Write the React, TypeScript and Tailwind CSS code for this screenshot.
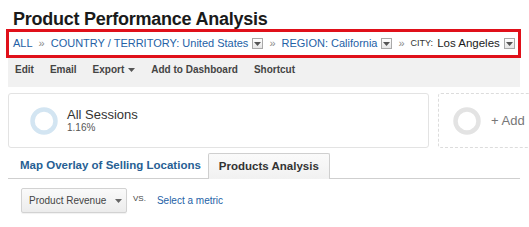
import React from "react";

const Caret = () => (
  <span className="ml-[4px] inline-flex h-[11px] w-[11px] items-center justify-center border border-[#a9a9a9] bg-gradient-to-b from-[#ffffff] to-[#e6e6e6]">
    <svg width="7" height="4" viewBox="0 0 7 4">
      <path d="M0 0 L7 0 L3.5 4 Z" fill="#555" />
    </svg>
  </span>
);

const Sep = () => <span className="mx-[6px] text-[#8a8a8a]">»</span>;

export default function App() {
  return (
    <div
      className="relative h-[227px] w-[529px] overflow-hidden bg-white"
      style={{ fontFamily: '"Liberation Sans", Arial, sans-serif' }}
    >
      <div className="h-[29px] pl-[13px] pt-[9px] text-[18px] font-bold leading-[20px] tracking-[-0.25px] text-[#1a1a1a]">
        Product Performance Analysis
      </div>

      <div className="ml-[6px] flex h-[29px] w-[515px] items-center border-[3px] border-[#e0101a] pl-[4px] text-[11px] text-[#2461a6]">
        <span>ALL</span>
        <Sep />
        <span>COUNTRY / TERRITORY: United States</span>
        <Caret />
        <Sep />
        <span>REGION: California</span>
        <Caret />
        <Sep />
        <span className="text-[9px] text-[#333]">CITY:</span>
        <span className="ml-[4px] text-[11.5px] text-[#1a1a1a]">Los Angeles</span>
        <Caret />
      </div>

      <div className="ml-[8px] flex h-[29px] w-[512px] items-start gap-[16px] bg-[#f1f1f1] pl-[7px] pt-[6px] text-[10px] font-bold leading-[12px] text-[#444]">
        <span>Edit</span>
        <span>Email</span>
        <span className="flex items-center">
          Export
          <svg className="ml-[4px]" width="7" height="4" viewBox="0 0 7 4">
            <path d="M0 0 L7 0 L3.5 4 Z" fill="#555" />
          </svg>
        </span>
        <span>Add to Dashboard</span>
        <span>Shortcut</span>
      </div>

      <div className="ml-[8px] mt-[6px] flex gap-[9px]">
        <div className="flex h-[55px] w-[421px] shrink-0 items-center rounded-[3px] border border-[#e3e3e3] pl-[21px]">
          <svg width="28" height="28" viewBox="0 0 28 28">
            <circle cx="14" cy="14" r="11.5" fill="none" stroke="#d3e5f2" strokeWidth="4.5" />
          </svg>
          <div className="ml-[9px] flex flex-col">
            <span className="text-[13px] leading-[15px] text-[#333]">All Sessions</span>
            <span className="text-[10px] leading-[12px] text-[#555]">1.16%</span>
          </div>
        </div>
        <div className="flex h-[55px] w-[120px] shrink-0 items-center rounded-[3px] border border-dashed border-[#dcdcdc] pl-[14px]">
          <svg width="28" height="28" viewBox="0 0 28 28">
            <circle cx="14" cy="14" r="11.5" fill="none" stroke="#e3e3e3" strokeWidth="4.5" />
          </svg>
          <span className="ml-[10px] text-[13px] text-[#777]">+ Add</span>
        </div>
      </div>

      <div className="ml-[8px] mt-[5px] flex h-[26px] w-[512px] items-end border-b border-[#cfcfcf]">
        <div className="flex h-[25px] items-center pl-[12px] pr-[7px] text-[11.5px] font-bold text-[#275f94]">
          Map Overlay of Selling Locations
        </div>
        <div className="-mb-px flex h-[26px] items-center rounded-t-[2px] border border-b-0 border-[#cfcfcf] bg-gradient-to-b from-[#fafafa] to-[#f1f1f1] px-[10px] text-[11.5px] font-bold text-[#333]">
          Products Analysis
        </div>
      </div>

      <div className="ml-[21px] mt-[9px] flex items-center">
        <div className="flex h-[25px] w-[106px] items-center rounded-[2px] border border-[#d2d2d2] bg-gradient-to-b from-[#fafafa] to-[#ececec] pl-[7px] text-[10px] text-[#444] shadow-[0_1px_1px_rgba(0,0,0,0.06)]">
          <span>Product Revenue</span>
          <svg className="ml-[9px]" width="7" height="4" viewBox="0 0 7 4">
            <path d="M0 0 L7 0 L3.5 4 Z" fill="#666" />
          </svg>
        </div>
        <span className="ml-[6px] -mt-[4px] text-[8px] text-[#444]">VS.</span>
        <span className="ml-[11px] text-[10px] text-[#2461a6]">Select a metric</span>
      </div>
    </div>
  );
}
